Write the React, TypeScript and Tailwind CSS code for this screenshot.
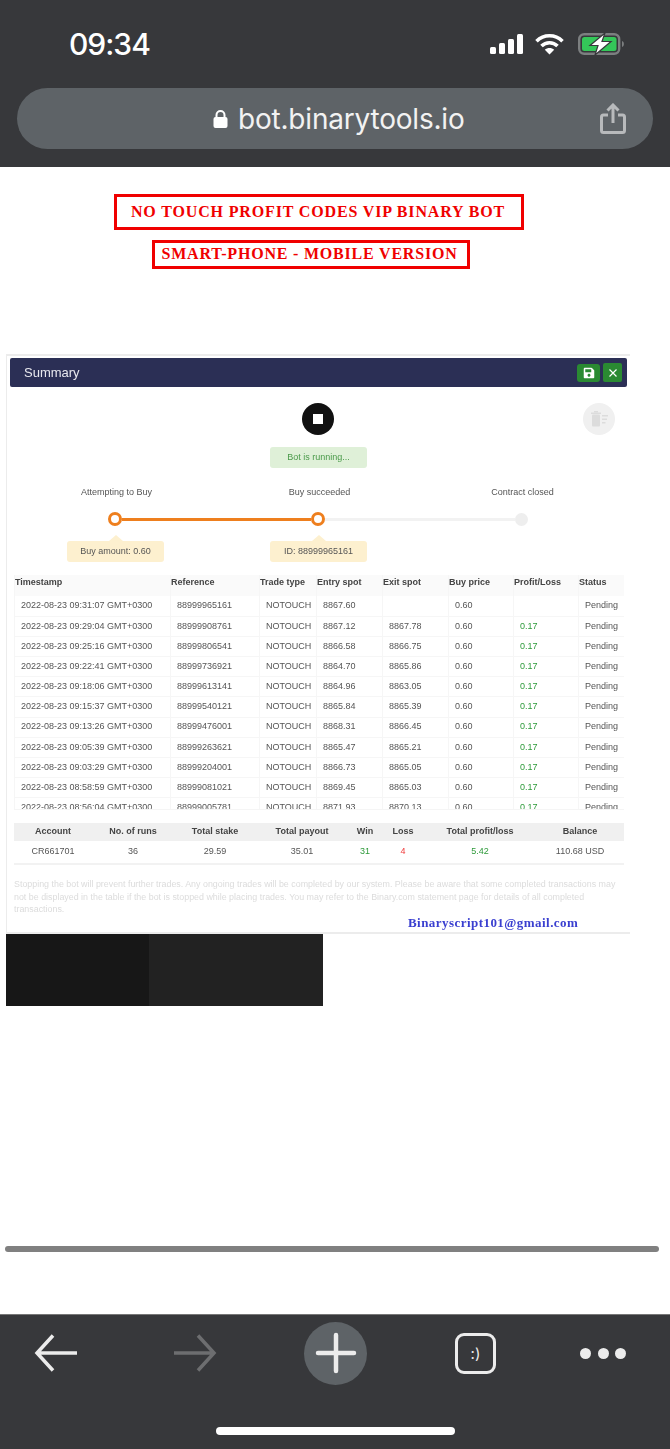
import { FaSave } from "react-icons/fa";

const rows = [
  ["2022-08-23 09:31:07 GMT+0300", "88999965161", "8867.60", "", ""],
  ["2022-08-23 09:29:04 GMT+0300", "88999908761", "8867.12", "8867.78", "0.17"],
  ["2022-08-23 09:25:16 GMT+0300", "88999806541", "8866.58", "8866.75", "0.17"],
  ["2022-08-23 09:22:41 GMT+0300", "88999736921", "8864.70", "8865.86", "0.17"],
  ["2022-08-23 09:18:06 GMT+0300", "88999613141", "8864.96", "8863.05", "0.17"],
  ["2022-08-23 09:15:37 GMT+0300", "88999540121", "8865.84", "8865.39", "0.17"],
  ["2022-08-23 09:13:26 GMT+0300", "88999476001", "8868.31", "8866.45", "0.17"],
  ["2022-08-23 09:05:39 GMT+0300", "88999263621", "8865.47", "8865.21", "0.17"],
  ["2022-08-23 09:03:29 GMT+0300", "88999204001", "8866.73", "8865.05", "0.17"],
  ["2022-08-23 08:58:59 GMT+0300", "88999081021", "8869.45", "8865.03", "0.17"],
  ["2022-08-23 08:56:04 GMT+0300", "88999005781", "8871.93", "8870.13", "0.17"],
];

const headers = ["Timestamp", "Reference", "Trade type", "Entry spot", "Exit spot", "Buy price", "Profit/Loss", "Status"];

function StatusIcons() {
  return (
    <div className="flex items-center">
      <svg width="33" height="22" viewBox="0 0 33 22" fill="#fff">
        <rect x="0" y="14" width="6" height="7" rx="1.500" />
        <rect x="9" y="10" width="6" height="11" rx="1.500" />
        <rect x="18" y="6" width="6" height="15" rx="1.500" />
        <rect x="27" y="1" width="6" height="20" rx="1.500" />
      </svg>
      <svg className="ml-[12px]" width="29" height="22" viewBox="0 0 29 22" fill="none" stroke="#fff" strokeWidth="3.600">
        <path d="M1.500 8.200C8.800 1 20.200 1 27.500 8.200" />
        <path d="M6.500 13C11 8.600 18 8.600 22.500 13" />
        <path d="M14.500 21.500L9.800 16.800C12.400 14.400 16.600 14.400 19.200 16.800Z" fill="#fff" stroke="none" />
      </svg>
      <svg className="ml-[14px]" width="47" height="22" viewBox="0 0 47 22">
        <rect x="1.200" y="1.200" width="40" height="19.600" rx="5" fill="none" stroke="#7c7f80" strokeWidth="2.400" />
        <rect x="4" y="4" width="34.500" height="14" rx="2.500" fill="#34c759" />
        <path d="M44 8c2.500.6 2.500 5.400 0 6z" fill="#7c7f80" />
        <path d="M27 0L12 12.500h8L17 22l16-13.500h-9z" fill="#fff" stroke="#37383b" strokeWidth="1.200" />
      </svg>
    </div>
  );
}

function Callout({ text }: { text: string }) {
  return (
    <div className="flex w-[97px] flex-col items-center">
      <div className="h-0 w-0 border-x-[7px] border-b-[6px] border-x-transparent border-b-[#fdf0cf]" />
      <div className="flex h-[21px] w-full items-center justify-center rounded-[3px] bg-[#fdf0cf] text-[9px] text-[#555]">{text}</div>
    </div>
  );
}

function TradesTable() {
  return (
    <div className="ml-[7px] h-[235px] w-[610px] overflow-hidden border-b border-[#f5f5f5]">
      <table className="w-full table-fixed border-collapse text-[9px] text-[#555]">
        <colgroup>
          <col className="w-[156px]" />
          <col className="w-[89px]" />
          <col className="w-[57px]" />
          <col className="w-[66px]" />
          <col className="w-[66px]" />
          <col className="w-[65px]" />
          <col className="w-[65px]" />
          <col className="w-[46px]" />
        </colgroup>
        <thead>
          <tr className="h-[21px] bg-[#fafafa]">
            {headers.map((h) => (
              <th key={h} className="whitespace-nowrap border-x border-[#f6f6f6] p-0 pb-[6px] text-left font-bold text-[#444]">{h}</th>
            ))}
          </tr>
        </thead>
        <tbody>
          {rows.map((r) => (
            <tr key={r[0]} className="h-[20.2px] border-b border-[#f6f6f6]">
              <td className="whitespace-nowrap border-x border-[#f6f6f6] p-0 pl-[6px]">{r[0]}</td>
              <td className="border-x border-[#f6f6f6] p-0 pl-[6px]">{r[1]}</td>
              <td className="border-x border-[#f6f6f6] p-0 pl-[6px]">NOTOUCH</td>
              <td className="border-x border-[#f6f6f6] p-0 pl-[6px]">{r[2]}</td>
              <td className="border-x border-[#f6f6f6] p-0 pl-[6px]">{r[3]}</td>
              <td className="border-x border-[#f6f6f6] p-0 pl-[6px]">0.60</td>
              <td className="border-x border-[#f6f6f6] p-0 pl-[6px] text-[#2e9a3a]">{r[4]}</td>
              <td className="border-x border-[#f6f6f6] p-0 pl-[6px]">Pending</td>
            </tr>
          ))}
        </tbody>
      </table>
    </div>
  );
}

function SummaryTable() {
  return (
    <div className="ml-[7px] mt-[13px] w-[610px] border-b-2 border-[#f2f2f2] text-center text-[9px]">
      <div className="grid h-[18px] grid-cols-[78px_82px_82px_92px_34px_42px_112px_88px] items-center bg-[#f0f0f0] font-bold text-[#444]">
        <div>Account</div>
        <div>No. of runs</div>
        <div>Total stake</div>
        <div>Total payout</div>
        <div>Win</div>
        <div>Loss</div>
        <div>Total profit/loss</div>
        <div>Balance</div>
      </div>
      <div className="grid h-[22px] grid-cols-[78px_82px_82px_92px_34px_42px_112px_88px] items-center text-[#555]">
        <div>CR661701</div>
        <div>36</div>
        <div>29.59</div>
        <div>35.01</div>
        <div className="text-[#2e9a3a]">31</div>
        <div className="text-[#f03a3a]">4</div>
        <div className="text-[#2e9a3a]">5.42</div>
        <div>110.68 USD</div>
      </div>
    </div>
  );
}

function Summary() {
  return (
    <div className="ml-[6px] mt-[85px] h-[580px] w-[624px] border-l border-t-2 border-b-2 border-[#ececec] bg-white font-['Liberation_Sans',Arial,sans-serif] blur-[0.4px]">
      <div className="ml-[3px] mt-[2px] flex h-[29px] w-[617px] items-center rounded-[2px] bg-[#2b2f55] pl-[14px] pr-[5px]">
        <span className="text-[13px] text-[#e8e8ee]">Summary</span>
        <div className="ml-auto flex items-center gap-[3px]">
          <div className="flex h-[18px] w-[23px] items-center justify-center rounded-[3px] bg-[#2a8a32] text-white">
            <FaSave size={12} />
          </div>
          <div className="flex h-[19px] w-[19px] items-center justify-center rounded-[2px] bg-[#2a8a32]">
            <svg width="10" height="10" viewBox="0 0 10 10" stroke="#fff" strokeWidth="1.200"><path d="M1.500 1.500l7 7M8.500 1.500l-7 7" /></svg>
          </div>
        </div>
      </div>

      <div className="mt-[16px] flex h-[32px]">
        <div className="ml-[295px] flex h-[32px] w-[32px] items-center justify-center rounded-full bg-[#111]">
          <div className="h-[10px] w-[10px] bg-white" />
        </div>
        <div className="ml-[249px] flex h-[32px] w-[32px] items-center justify-center rounded-full bg-[#f0f0f0]">
          <svg width="17" height="16" viewBox="0 0 17 16" fill="#dcdcdc">
            <rect x="1" y="3.500" width="8" height="12" rx="1" />
            <rect x="0" y="1.500" width="10" height="1.500" />
            <rect x="3" y="0" width="4" height="1.500" />
            <rect x="11" y="4" width="6" height="1.500" />
            <rect x="11" y="7.500" width="5" height="1.500" />
            <rect x="11" y="11" width="3.500" height="1.500" />
          </svg>
        </div>
      </div>

      <div className="ml-[263px] mt-[12px] flex h-[21px] w-[97px] items-center justify-center rounded-[3px] bg-[#dff0d8] text-[9px] text-[#4a9a4a]">Bot is running...</div>

      <div className="mt-[18px] ml-[8px] grid h-[12px] w-[609px] grid-cols-[203px_203px_203px] text-center text-[9px] leading-[12px] text-[#555]">
        <div>Attempting to Buy</div>
        <div>Buy succeeded</div>
        <div>Contract closed</div>
      </div>

      <div className="ml-[101px] mt-[14px] flex h-[14px] w-[420px] items-center">
        <div className="h-[14px] w-[14px] shrink-0 rounded-full border-[3px] border-[#ee7f1e] bg-white" />
        <div className="h-[3px] w-[189px] bg-[#ee7f1e]" />
        <div className="h-[14px] w-[14px] shrink-0 rounded-full border-[3px] border-[#ee7f1e] bg-white" />
        <div className="h-[3px] w-[190px] bg-[#f2f2f2]" />
        <div className="h-[13px] w-[13px] shrink-0 rounded-full bg-[#eeeeee]" />
      </div>

      <div className="ml-[60px] mt-[9px] flex gap-[106px]">
        <Callout text="Buy amount: 0.60" />
        <Callout text="ID: 88999965161" />
      </div>

      <div className="mt-[13px]">
        <TradesTable />
      </div>
      <SummaryTable />

      <p className="ml-[7px] mt-[13px] w-[610px] text-[8.9px] leading-[12.5px] text-[#dcdcdc]">
        Stopping the bot will prevent further trades. Any ongoing trades will be completed by our system. Please be aware that some completed transactions may not be displayed in the table if the bot is stopped while placing trades. You may refer to the Binary.com statement page for details of all completed transactions.
      </p>
      <div className="ml-[401px] whitespace-nowrap font-['Liberation_Serif',serif] text-[13px] font-bold leading-[13px] tracking-[0.45px] text-[#3a3fd0]">Binaryscript101@gmail.com</div>
    </div>
  );
}

export default function App() {
  return (
    <div className="flex h-[1449px] w-[670px] flex-col overflow-hidden bg-white">
      <header className="h-[167px] shrink-0 bg-[#37383b] font-['Inter',sans-serif]">
        <div className="flex h-[88px] items-start pl-[69px] pr-[45px] pt-[27px]">
          <span className="text-[30px] font-medium leading-[34px] tracking-[-1px] text-white">09:34</span>
          <div className="ml-auto mt-[6px]"><StatusIcons /></div>
        </div>
        <div className="mx-[17px] flex h-[61px] w-[636px] items-center rounded-full bg-[#5e6367] pl-[196px] pr-[27px]">
          <svg width="15" height="18" viewBox="0 0 15 18" fill="#fff">
            <path d="M3.500 8V5a4 4 0 0 1 8 0v3" fill="none" stroke="#fff" strokeWidth="2" />
            <rect x="0.500" y="7" width="14" height="11" rx="2" />
          </svg>
          <span className="ml-[10px] text-[28px] leading-[34px] tracking-[-0.2px] text-[#f2f2f2]">bot.binarytools.io</span>
          <svg className="ml-auto" width="26" height="31" viewBox="0 0 26 31" fill="none" stroke="#b8babc" strokeWidth="3">
            <path d="M8 12H3.500a2 2 0 0 0-2 2v13.500a2 2 0 0 0 2 2h19a2 2 0 0 0 2-2V14a2 2 0 0 0-2-2H18" />
            <path d="M13 20V2M7.500 7.500L13 2l5.500 5.500" />
          </svg>
        </div>
      </header>

      <main className="flex-1 font-['Liberation_Serif',serif]">
        <div className="ml-[114px] mt-[27px] flex h-[36px] w-[410px] items-center justify-center border-[3px] border-[#f00000] pb-[1px] pr-[2px] text-[16px] font-bold tracking-[0.85px] text-[#f00000]">NO TOUCH PROFIT CODES VIP BINARY BOT</div>
        <div className="ml-[152px] mt-[10px] flex h-[29px] w-[318px] items-center justify-center border-[3px] border-[#f00000] pb-[2px] pr-[3px] text-[16px] font-bold tracking-[0.8px] text-[#f00000]">SMART-PHONE - MOBILE VERSION</div>
        <Summary />
        <div className="ml-[6px] flex h-[72px] w-[317px]">
          <div className="w-[143px] bg-[#171717]" />
          <div className="w-[174px] bg-[#222222]" />
        </div>
        <div className="ml-[5px] mt-[240px] h-[6px] w-[654px] rounded-full bg-[#808080]" />
      </main>

      <footer className="h-[135px] shrink-0 border-t border-[#777] bg-[#37383b]">
        <div className="flex h-[70px] items-center pt-[6px]">
          <svg className="ml-[34px]" width="43" height="38" viewBox="0 0 43 38" fill="none" stroke="#ececec" strokeWidth="3.500">
            <path d="M43 19H3M19 1.500L3 19l16 17.500" />
          </svg>
          <svg className="ml-[97px]" width="43" height="38" viewBox="0 0 43 38" fill="none" stroke="#6d6e70" strokeWidth="3.500">
            <path d="M0 19h40M24 1.500L40 19 24 36.500" />
          </svg>
          <div className="ml-[87px] flex h-[63px] w-[63px] items-center justify-center rounded-full bg-[#5e6367]">
            <svg width="42" height="42" viewBox="0 0 42 42" stroke="#ececec" strokeWidth="4.500" strokeLinecap="round"><path d="M21 3v36M3 21h36" /></svg>
          </div>
          <div className="ml-[88px] flex h-[41px] w-[41px] items-center justify-center rounded-[9px] border-[3px] border-[#ececec] font-['Inter',sans-serif] text-[15px] leading-none text-[#ececec]">:)</div>
          <div className="ml-[84px] flex gap-[6.5px]">
            <div className="h-[11px] w-[11px] rounded-full bg-[#ececec]" />
            <div className="h-[11px] w-[11px] rounded-full bg-[#ececec]" />
            <div className="h-[11px] w-[11px] rounded-full bg-[#ececec]" />
          </div>
        </div>
        <div className="ml-[216px] mt-[42px] h-[8px] w-[239px] rounded-full bg-white" />
      </footer>
    </div>
  );
}
